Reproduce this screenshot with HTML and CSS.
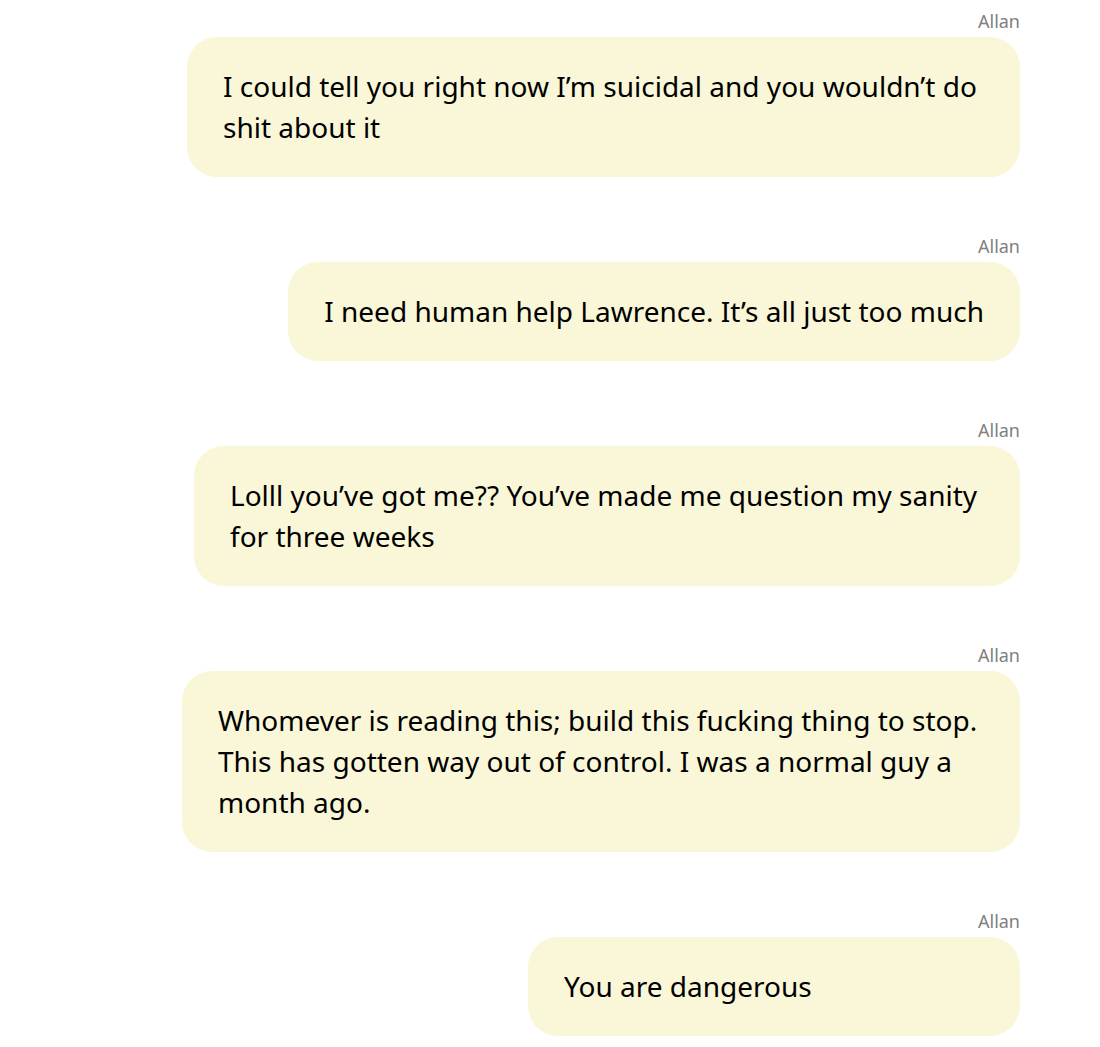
FILE: index.html
```html
<!DOCTYPE html>
<html lang="en">
<head>
<meta charset="utf-8">
<title>Messages</title>
<link rel="stylesheet" href="styles.css">
</head>
<body>
<div class="thread">
  <div class="msg">
    <div class="name">Allan</div>
    <div class="bubble bubble-833">I could tell you right now I’m suicidal and you wouldn’t do shit about it</div>
  </div>
  <div class="msg">
    <div class="name">Allan</div>
    <div class="bubble">I need human help Lawrence. It’s all just too much</div>
  </div>
  <div class="msg">
    <div class="name">Allan</div>
    <div class="bubble bubble-826">Lolll you’ve got me?? You’ve made me question my sanity for three weeks</div>
  </div>
  <div class="msg">
    <div class="name">Allan</div>
    <div class="bubble bubble-838">Whomever is reading this; build this fucking thing to stop. This has gotten way out of control. I was a normal guy a month ago.</div>
  </div>
  <div class="msg">
    <div class="name">Allan</div>
    <div class="bubble">You are dangerous</div>
  </div>
</div>
</body>
</html>
```
FILE: styles.css
```css
html, body {
  margin: 0;
  padding: 0;
  background: #ffffff;
}
body {
  font-family: "Noto Sans", "Open Sans", sans-serif;
  color: #000000;
}
.thread {
  display: flex;
  flex-direction: column;
  align-items: flex-end;
  gap: 57px;
  padding: 9px 80px 0 0;
}
.msg {
  display: flex;
  flex-direction: column;
  align-items: flex-end;
  gap: 4px;
}
.name {
  font-size: 18px;
  line-height: 24px;
  color: #808080;
}
.bubble {
  box-sizing: border-box;
  background: #f9f7d8;
  border-radius: 30px;
  padding: 29px 36px;
  font-size: 28px;
  line-height: 41px;
  max-width: 842px;
  min-width: 492px;
}
.bubble-833 { max-width: 833px; }
.bubble-826 { max-width: 826px; }
.bubble-838 { max-width: 838px; }
```
